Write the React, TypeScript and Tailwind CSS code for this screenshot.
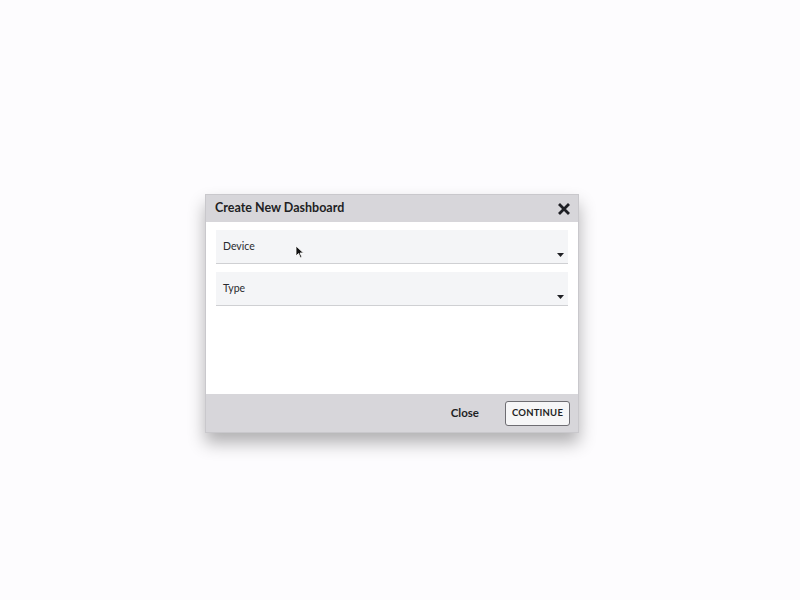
import React from 'react';

const Caret = () => (
  <svg width="7" height="4" viewBox="0 0 7 4" className="absolute right-[4px] bottom-[6px]">
    <path d="M0 0 H7 L3.5 4 Z" fill="#1f2024" />
  </svg>
);

const SelectField = ({ label }: { label: string }) => (
  <div className="relative h-[34px] bg-[#f4f5f7] border-b border-[#cfd0d3] px-[7px] pt-[11px]">
    <div className="text-[10.5px] text-[#2a2b2f] leading-none">{label}</div>
    <Caret />
  </div>
);

const App: React.FC = () => {
  return (
    <div
      className="w-[800px] h-[600px] bg-[#fdfcfe] flex items-start justify-start pl-[205px] pt-[194px] relative"
      style={{ fontFamily: 'Lato, "Noto Sans", sans-serif' }}
    >
      <div className="w-[374px] h-[239px] bg-white flex flex-col border border-[#c9c8cc] shadow-[0_10px_16px_rgba(0,0,0,0.3)]">
        <div className="h-[27px] bg-[#d7d6da] flex items-center justify-between pl-[9px] pr-[8px]">
          <span className="text-[12.5px] font-bold text-[#1e1f24]">Create New Dashboard</span>
          <svg width="12" height="12" viewBox="0 0 12 12">
            <path d="M2 2 L10 10 M10 2 L2 10" stroke="#1e1f24" strokeWidth="2.8" strokeLinecap="square" />
          </svg>
        </div>
        <div className="flex-1 pl-[10px] pr-[10px] pt-[8px] flex flex-col gap-[8px]">
          <SelectField label="Device" />
          <SelectField label="Type" />
        </div>
        <div className="h-[38px] bg-[#d7d6da] flex items-center justify-end gap-[26px] pr-[8px]">
          <span className="text-[11.5px] font-bold text-[#1e1f24]">Close</span>
          <button className="h-[25px] w-[65px] rounded-[3px] border border-[#6e6d72] bg-[#f6f6f7] text-[9.5px] font-bold text-[#1e1f24] tracking-[0.2px]">
            CONTINUE
          </button>
        </div>
      </div>
      <svg width="10" height="14" viewBox="0 0 10 14" className="absolute left-[295px] top-[245px]">
        <path d="M1 1 V11 L3.5 8.5 L5.5 13 L7 12.3 L5 8 H8.5 Z" fill="#111" stroke="#fff" strokeWidth="0.8" />
      </svg>
    </div>
  );
};

export default App;
